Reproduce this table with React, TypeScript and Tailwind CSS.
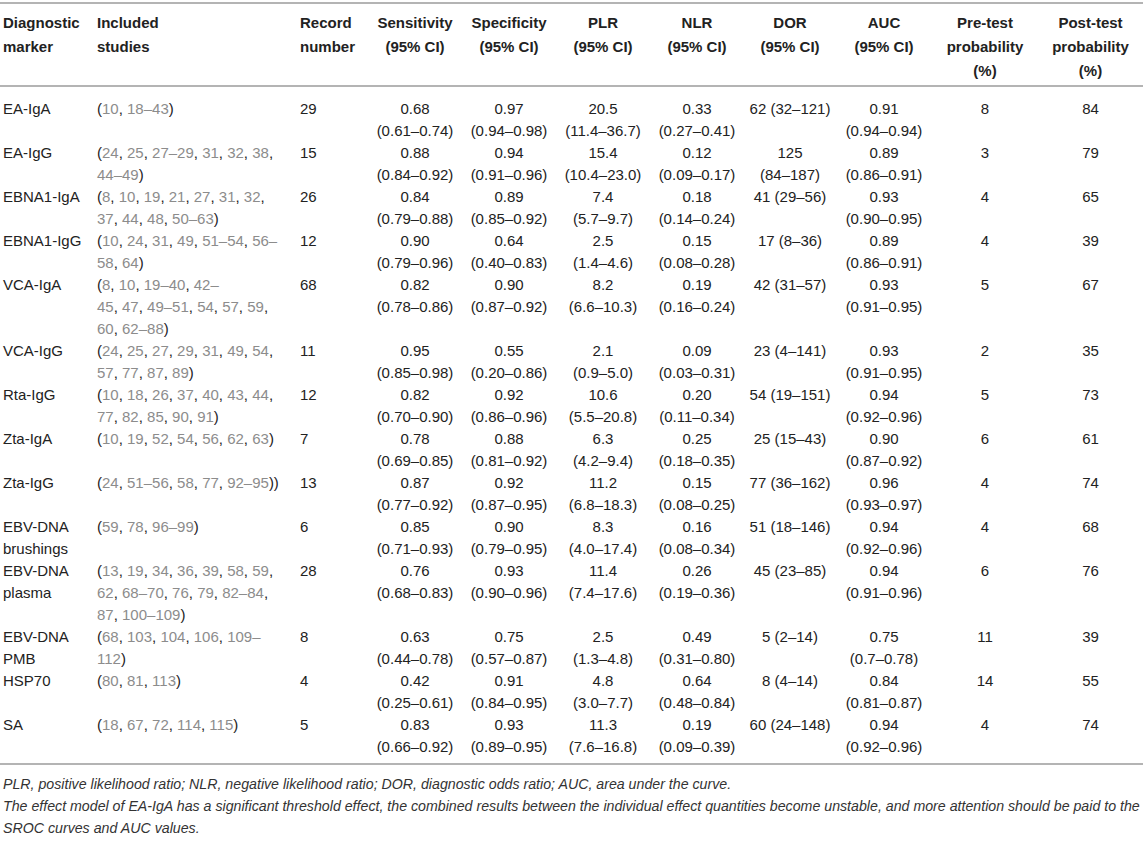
const cols = [
  { w: 'w-[97px]', align: 'text-left pl-[3px]' },
  { w: 'w-[203px]', align: 'text-left' },
  { w: 'w-[68px]', align: 'text-left' },
  { w: 'w-[94px]', align: 'text-center' },
  { w: 'w-[94px]', align: 'text-center' },
  { w: 'w-[94px]', align: 'text-center' },
  { w: 'w-[94px]', align: 'text-center' },
  { w: 'w-[92px]', align: 'text-center' },
  { w: 'w-[96px]', align: 'text-center' },
  { w: 'w-[106px]', align: 'text-center' },
  { w: 'w-[105px]', align: 'text-center' },
];

const headers = [
  ['Diagnostic', 'marker'],
  ['Included', 'studies'],
  ['Record', 'number'],
  ['Sensitivity', '(95% CI)'],
  ['Specificity', '(95% CI)'],
  ['PLR', '(95% CI)'],
  ['NLR', '(95% CI)'],
  ['DOR', '(95% CI)'],
  ['AUC', '(95% CI)'],
  ['Pre-test', 'probability', '(%)'],
  ['Post-test', 'probability', '(%)'],
];

// "|" marks a line break in the cell
const rows: string[][] = [
  ['EA-IgA', '(10, 18–43)', '29', '0.68|(0.61–0.74)', '0.97|(0.94–0.98)', '20.5|(11.4–36.7)', '0.33|(0.27–0.41)', '62 (32–121)', '0.91|(0.94–0.94)', '8', '84'],
  ['EA-IgG', '(24, 25, 27–29, 31, 32, 38,|44–49)', '15', '0.88|(0.84–0.92)', '0.94|(0.91–0.96)', '15.4|(10.4–23.0)', '0.12|(0.09–0.17)', '125|(84–187)', '0.89|(0.86–0.91)', '3', '79'],
  ['EBNA1-IgA', '(8, 10, 19, 21, 27, 31, 32,|37, 44, 48, 50–63)', '26', '0.84|(0.79–0.88)', '0.89|(0.85–0.92)', '7.4|(5.7–9.7)', '0.18|(0.14–0.24)', '41 (29–56)', '0.93|(0.90–0.95)', '4', '65'],
  ['EBNA1-IgG', '(10, 24, 31, 49, 51–54, 56–|58, 64)', '12', '0.90|(0.79–0.96)', '0.64|(0.40–0.83)', '2.5|(1.4–4.6)', '0.15|(0.08–0.28)', '17 (8–36)', '0.89|(0.86–0.91)', '4', '39'],
  ['VCA-IgA', '(8, 10, 19–40, 42–|45, 47, 49–51, 54, 57, 59,|60, 62–88)', '68', '0.82|(0.78–0.86)', '0.90|(0.87–0.92)', '8.2|(6.6–10.3)', '0.19|(0.16–0.24)', '42 (31–57)', '0.93|(0.91–0.95)', '5', '67'],
  ['VCA-IgG', '(24, 25, 27, 29, 31, 49, 54,|57, 77, 87, 89)', '11', '0.95|(0.85–0.98)', '0.55|(0.20–0.86)', '2.1|(0.9–5.0)', '0.09|(0.03–0.31)', '23 (4–141)', '0.93|(0.91–0.95)', '2', '35'],
  ['Rta-IgG', '(10, 18, 26, 37, 40, 43, 44,|77, 82, 85, 90, 91)', '12', '0.82|(0.70–0.90)', '0.92|(0.86–0.96)', '10.6|(5.5–20.8)', '0.20|(0.11–0.34)', '54 (19–151)', '0.94|(0.92–0.96)', '5', '73'],
  ['Zta-IgA', '(10, 19, 52, 54, 56, 62, 63)', '7', '0.78|(0.69–0.85)', '0.88|(0.81–0.92)', '6.3|(4.2–9.4)', '0.25|(0.18–0.35)', '25 (15–43)', '0.90|(0.87–0.92)', '6', '61'],
  ['Zta-IgG', '(24, 51–56, 58, 77, 92–95))', '13', '0.87|(0.77–0.92)', '0.92|(0.87–0.95)', '11.2|(6.8–18.3)', '0.15|(0.08–0.25)', '77 (36–162)', '0.96|(0.93–0.97)', '4', '74'],
  ['EBV-DNA|brushings', '(59, 78, 96–99)', '6', '0.85|(0.71–0.93)', '0.90|(0.79–0.95)', '8.3|(4.0–17.4)', '0.16|(0.08–0.34)', '51 (18–146)', '0.94|(0.92–0.96)', '4', '68'],
  ['EBV-DNA|plasma', '(13, 19, 34, 36, 39, 58, 59,|62, 68–70, 76, 79, 82–84,|87, 100–109)', '28', '0.76|(0.68–0.83)', '0.93|(0.90–0.96)', '11.4|(7.4–17.6)', '0.26|(0.19–0.36)', '45 (23–85)', '0.94|(0.91–0.96)', '6', '76'],
  ['EBV-DNA|PMB', '(68, 103, 104, 106, 109–|112)', '8', '0.63|(0.44–0.78)', '0.75|(0.57–0.87)', '2.5|(1.3–4.8)', '0.49|(0.31–0.80)', '5 (2–14)', '0.75|(0.7–0.78)', '11', '39'],
  ['HSP70', '(80, 81, 113)', '4', '0.42|(0.25–0.61)', '0.91|(0.84–0.95)', '4.8|(3.0–7.7)', '0.64|(0.48–0.84)', '8 (4–14)', '0.84|(0.81–0.87)', '14', '55'],
  ['SA', '(18, 67, 72, 114, 115)', '5', '0.83|(0.66–0.92)', '0.93|(0.89–0.95)', '11.3|(7.6–16.8)', '0.19|(0.09–0.39)', '60 (24–148)', '0.94|(0.92–0.96)', '4', '74'],
];

function Refs({ text }: { text: string }) {
  const parts = text.split(/([0-9–]+)/);
  return (
    <>
      {parts.map((p, i) =>
        /^[0-9–]+$/.test(p) ? (
          <span key={i} className="text-[#8c8c8c]">{p}</span>
        ) : (
          <span key={i}>{p}</span>
        )
      )}
    </>
  );
}

function Lines({ text, refs }: { text: string; refs?: boolean }) {
  return (
    <>
      {text.split('|').map((line, i) => (
        <div key={i} className="whitespace-nowrap">
          {refs ? <Refs text={line} /> : line}
        </div>
      ))}
    </>
  );
}

export default function App() {
  return (
    <div className="w-[1143px] min-h-[843px] bg-white text-[#222] font-['Liberation_Sans',Arial,sans-serif] pt-[2px]">
      <table className="w-[1141px] table-fixed border-collapse">
        <colgroup>
          {cols.map((c, i) => (
            <col key={i} className={c.w} />
          ))}
        </colgroup>
        <thead>
          <tr className="border-t-2 border-b-2 border-[#b4b4b4]">
            {headers.map((h, i) => (
              <th
                key={i}
                className={`${cols[i].align} align-top font-bold text-[15px] leading-[24px] pt-[7px] pb-[2px]`}
              >
                {h.map((l, j) => (
                  <div key={j} className="whitespace-nowrap">{l}</div>
                ))}
              </th>
            ))}
          </tr>
        </thead>
        <tbody className="border-b-2 border-[#b4b4b4]">
          {rows.map((r, ri) => (
            <tr key={ri}>
              {r.map((cell, ci) => (
                <td
                  key={ci}
                  className={`${cols[ci].align} align-top text-[15px] leading-[22px] ${ri === 0 ? 'pt-[11px]' : ''} ${ri === rows.length - 1 ? 'pb-[5px]' : ''}`}
                >
                  <Lines text={cell} refs={ci === 1} />
                </td>
              ))}
            </tr>
          ))}
        </tbody>
      </table>
      <div className="pl-[3px] pt-[8px] text-[14.2px] leading-[22px] italic text-[#333]">
        <p className="whitespace-nowrap">
          PLR, positive likelihood ratio; NLR, negative likelihood ratio; DOR, diagnostic odds ratio; AUC, area under the curve.
        </p>
        <p className="whitespace-nowrap">
          The effect model of EA-IgA has a significant threshold effect, the combined results between the individual effect
          quantities become unstable, and more attention should be paid to the
        </p>
        <p className="whitespace-nowrap">SROC curves and AUC values.</p>
      </div>
    </div>
  );
}
